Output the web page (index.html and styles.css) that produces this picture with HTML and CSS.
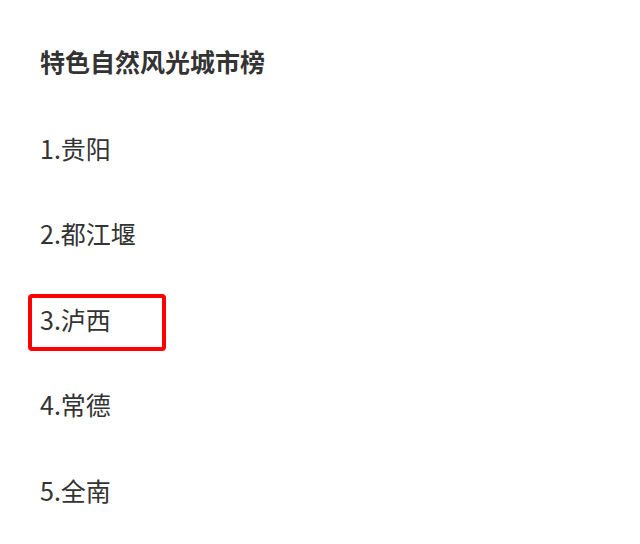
FILE: index.html
```html
<!DOCTYPE html>
<html lang="zh-CN">
<head>
    <meta charset="UTF-8">
    <title>特色自然风光城市榜</title>
    <link rel="stylesheet" href="styles.css">
</head>
<body>
    <div class="rank">
        <h2 class="rank-title">特色自然风光城市榜</h2>
        <ul class="rank-list">
            <li class="rank-item">1.贵阳</li>
            <li class="rank-item">2.都江堰</li>
            <li class="rank-item rank-item-marked">3.泸西</li>
            <li class="rank-item">4.常德</li>
            <li class="rank-item">5.全南</li>
        </ul>
    </div>
</body>
</html>
```

FILE: styles.css
```css
body, html {
    margin: 0;
    padding: 0;
    background: #fff;
    font-family: "Noto Sans CJK SC", "Noto Sans", sans-serif;
    color: #333;
}
.rank {
    padding: 44px 0 0 28px;
}
.rank-title {
    margin: 0 0 45px 12px;
    font-size: 25px;
    line-height: 34px;
    font-weight: bold;
}
.rank-list {
    margin: 0;
    padding: 0;
    list-style: none;
    display: flex;
    flex-direction: column;
    gap: 28.5px;
}
.rank-item {
    box-sizing: border-box;
    width: 138px;
    height: 57px;
    padding: 0 8px 8px;
    display: flex;
    align-items: center;
    font-size: 25px;
    border: 4px solid transparent;
    border-radius: 4px;
}
.rank-item-marked {
    border-color: #f00;
}
```
